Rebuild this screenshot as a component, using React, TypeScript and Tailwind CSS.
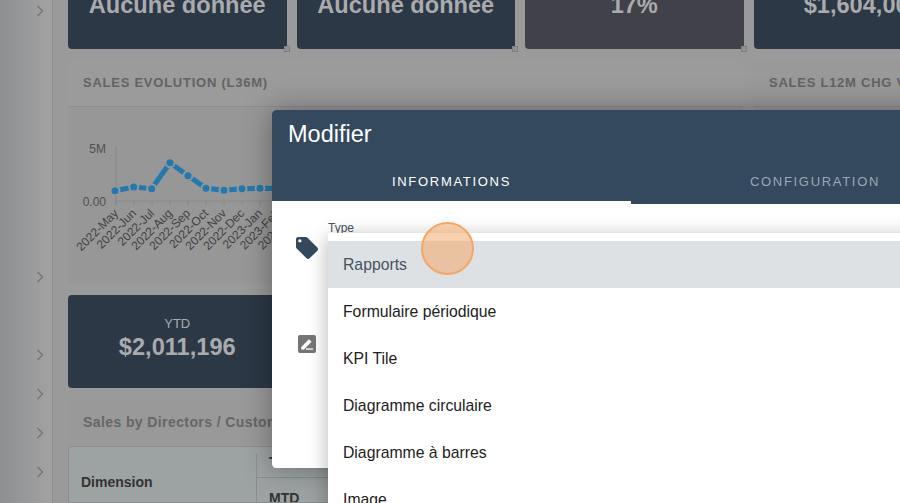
import React from "react";

const topCards = [
  { label: "Aucune donnée", bg: "bg-[#2c3846]" },
  { label: "Aucune donnée", bg: "bg-[#2c3846]" },
  { label: "17%", bg: "bg-[#404149]" },
  { label: "$1,604,000", bg: "bg-[#2c3846]" },
];

const chevrons = [
  { y: "mt-[4px]" },
  { y: "mt-[252px]" },
  { y: "mt-[64px]" },
  { y: "mt-[25px]" },
  { y: "mt-[25px]" },
  { y: "mt-[25px]" },
];

const points = [
  [115, 190.7],
  [133.7, 187],
  [151.7, 188.7],
  [170, 162.7],
  [188, 175.7],
  [206, 188.3],
  [224, 190.3],
  [242, 188.7],
  [260, 188.3],
  [278, 188.5],
];

const months = [
  "2022-May",
  "2022-Jun",
  "2022-Jul",
  "2022-Aug",
  "2022-Sep",
  "2022-Oct",
  "2022-Nov",
  "2022-Dec",
  "2023-Jan",
  "2023-Feb",
  "2023-Mar",
];

const options = ["Formulaire périodique", "KPI Tile", "Diagramme circulaire", "Diagramme à barres", "Image"];

const Handle = () => (
  <div className="absolute right-[-3px] bottom-[-3px] w-[6px] h-[6px] border border-[#7c8086] bg-[#8f9296]" />
);

const SalesChart = () => (
  <svg viewBox="68 107 675 176" className="w-[675px] h-[176px] block">
    <line x1="116" y1="146" x2="116" y2="205" stroke="#868686" />
    <line x1="116" y1="201" x2="272" y2="201" stroke="#8a8a8a" />
    {months.map((m, i) => (
      <g key={m}>
        <line x1={116 + i * 18} y1="201" x2={116 + i * 18} y2="205" stroke="#868686" />
        <text
          x={119 + i * 18}
          y="214"
          textAnchor="end"
          fontSize="12"
          fill="#424242"
          fontFamily="'Liberation Sans', Arial, sans-serif"
          transform={`rotate(-45 ${119 + i * 18} 214)`}
        >
          {m}
        </text>
      </g>
    ))}
    <text x="106" y="153" textAnchor="end" fontSize="12" fill="#505050" fontFamily="'Liberation Sans', Arial, sans-serif">
      5M
    </text>
    <text x="106" y="206" textAnchor="end" fontSize="12" fill="#505050" fontFamily="'Liberation Sans', Arial, sans-serif">
      0.00
    </text>
    <polyline
      points={points.map((p) => p.join(",")).join(" ")}
      fill="none"
      stroke="#2379ad"
      strokeWidth="5"
    />
    {points.map(([x, y]) => (
      <circle key={x} cx={x} cy={y} r="4.5" fill="#2379ad" stroke="#979797" strokeWidth="2" />
    ))}
  </svg>
);

export default function App() {
  return (
    <div
      className="relative w-[900px] h-[503px] overflow-hidden flex bg-[#9a9a9a] text-[#333]"
      style={{ fontFamily: "'Liberation Sans', Arial, sans-serif" }}
    >
      {/* sidebar */}
      <div className="w-[53px] shrink-0 bg-gradient-to-r from-[#8d8f92] to-[#a2a2a2] border-r border-[#8c8c8c] flex flex-col items-end pr-[8px]">
        {chevrons.map((c, i) => (
          <svg key={i} viewBox="0 0 8 14" className={`w-[8px] h-[14px] ${c.y}`} fill="none" stroke="#6f7275" strokeWidth="1.2">
            <path d="M1.5 2 L6.5 7 L1.5 12" />
          </svg>
        ))}
      </div>

      {/* dashboard behind */}
      <div className="flex-1 pl-[15px] flex flex-col">
        <div className="flex gap-[10px] h-[49px] shrink-0">
          {topCards.map((c, i) => (
            <div
              key={i}
              className={`relative w-[218.5px] shrink-0 ${c.bg} rounded-b-[4px] flex justify-center font-bold text-[23.6px] leading-[28px] text-[#a9abad]`}
            >
              <span className="mt-[-9px] whitespace-nowrap">{c.label}</span>
              {i < 3 && <Handle />}
            </div>
          ))}
        </div>

        <div className="flex gap-[10px] mt-[11px] shrink-0">
          <div className="w-[675px] shrink-0 h-[223px] rounded-[4px] bg-[#979797]">
            <div className="h-[47px] border-b border-[#8e8e8e] bg-[#9b9b9b] rounded-t-[4px] pl-[15px] flex items-center font-bold text-[13px] tracking-[0.75px] text-[#636363]">
              SALES EVOLUTION (L36M)
            </div>
            <SalesChart />
          </div>
          <div className="w-[300px] shrink-0 h-[223px] rounded-[4px] bg-[#979797]">
            <div className="h-[47px] border-b border-[#8e8e8e] bg-[#999] pl-[16px] flex items-center font-bold text-[13px] tracking-[0.75px] whitespace-nowrap text-[#636363]">
              SALES L12M CHG VS PY
            </div>
          </div>
        </div>

        <div className="mt-[12px] w-[218.5px] h-[93px] shrink-0 bg-[#2c3846] rounded-[4px] flex flex-col items-center text-[#a9abad]">
          <span className="mt-[21px] text-[13px] leading-[16px]">YTD</span>
          <span className="mt-[1px] font-bold text-[23.6px] leading-[28px]">$2,011,196</span>
        </div>

        <div className="mt-[10px] w-[675px] h-[48px] shrink-0 rounded-t-[4px] bg-[#999] pl-[15px] flex items-center font-bold text-[14px] tracking-[0.4px] text-[#666] whitespace-nowrap">
          Sales by Directors / Customers
        </div>

        <div className="w-[675px] h-[57px] shrink-0 overflow-hidden flex border border-[#8a8e8e] rounded-t-[4px] bg-[#9da2a2]">
          <div className="w-[187px] shrink-0 pl-[12px] pt-[27px] font-bold text-[14px] leading-[16px] text-[#333]">Dimension</div>
          <div className="flex-1 flex flex-col mt-[7px] border-l border-[#8a8e8e]">
            <div className="h-[24px] shrink-0 border-b border-[#8a8e8e] pl-[12px] font-bold text-[14px] leading-[16px]">Total</div>
            <div className="pl-[12px] pt-[12px] font-bold text-[14px] leading-[16px]">MTD</div>
          </div>
        </div>
      </div>

      {/* modal */}
      <div className="absolute left-[272px] top-[110px] w-[700px] h-[358px] bg-white rounded-[4px] shadow-[0_0_30px_rgba(0,0,0,0.35)]">
        <div className="h-[94px] bg-[#34495e] rounded-t-[4px] flex flex-col justify-between text-white">
          <div className="pl-[16px] pt-[10px] text-[23.5px] leading-[28px]">Modifier</div>
          <div className="flex h-[44px]">
            <div className="w-[359px] shrink-0 border-b-[3px] border-white flex items-center justify-center text-[13px] font-medium tracking-[1.7px] text-white pt-[2px]">
              INFORMATIONS
            </div>
            <div className="w-[368px] shrink-0 flex items-center justify-center text-[13px] font-medium tracking-[1.7px] text-[#9ba8b5]">
              CONFIGURATION
            </div>
          </div>
        </div>

        <div className="flex pl-[24px] pt-[32px]">
          <div className="w-[32px] shrink-0 flex flex-col">
            <svg viewBox="2 2 20 20" className="w-[22px] h-[22px] mt-[1px]" fill="#34495e">
              <path d="M21.41 11.58l-9-9C12.05 2.22 11.55 2 11 2H4c-1.1 0-2 .9-2 2v7c0 .55.22 1.05.59 1.42l9 9c.36.36.86.58 1.41.58.55 0 1.05-.22 1.41-.59l7-7c.37-.36.59-.86.59-1.41 0-.55-.23-1.06-.59-1.42zM5.5 7C4.67 7 4 6.33 4 5.5S4.67 4 5.5 4 7 4.67 7 5.5 6.33 7 5.5 7z" />
            </svg>
            <svg viewBox="0 0 18 18" className="w-[18px] h-[18px] mt-[76px] ml-[2px]">
              <rect width="18" height="18" rx="2" fill="#757575" />
              <path d="M3.2 12.3 L10.8 4.2 L13.6 6.8 L6 14.6 L3.2 14.6 Z" fill="#fff" />
              <rect x="8" y="13.4" width="7" height="1.3" fill="#fff" />
            </svg>
          </div>
          <div className="text-[12px] leading-[14px] text-[#4a5560] mt-[-15px]">Type</div>
        </div>
      </div>

      {/* dropdown */}
      <div className="absolute left-[328px] top-[233px] w-[600px] h-[300px] bg-white rounded-[2px] py-[8px] shadow-[0_4px_20px_rgba(0,0,0,0.3)] text-[15.75px]">
        <div className="h-[47px] bg-[#dee1e4] flex items-center pl-[15px] text-[#44535f]">Rapports</div>
        {options.map((o) => (
          <div key={o} className="h-[47px] flex items-center pl-[15px] text-[#222]">
            {o}
          </div>
        ))}
      </div>

      {/* click marker */}
      <div className="absolute left-[421px] top-[222px] w-[53px] h-[53px] rounded-full border-[2px] border-[#f2a765] bg-[#f5a45e]/50" />
    </div>
  );
}
